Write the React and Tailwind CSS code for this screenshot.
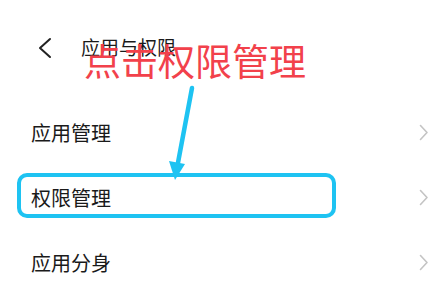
import React from 'react';

const rows = ['应用管理', '权限管理', '应用分身'];

function ChevronRight() {
  return (
    <svg width="10" height="17" viewBox="0 0 10 17" fill="none">
      <path d="M1.5 1.5 L8 8.5 L1.5 15.5" stroke="#c4c4c4" strokeWidth="1.6" strokeLinecap="round" strokeLinejoin="round" />
    </svg>
  );
}

export default function App() {
  return (
    <div
      className="relative w-[437px] h-[283px] overflow-hidden bg-white text-[#1a1a1a]"
      style={{ fontFamily: '"Noto Sans CJK SC", "Noto Sans", sans-serif' }}
    >
      {/* Header */}
      <div className="h-[100px] flex items-start pt-[36px] pl-[37px]">
        <svg width="16" height="22" viewBox="0 0 16 22" fill="none" className="mt-[1px]">
          <path d="M13 2 L3 11 L13 20" stroke="#222" strokeWidth="2" strokeLinecap="round" strokeLinejoin="round" />
        </svg>
        <span className="ml-[28px] text-[19px] leading-[22px]">应用与权限</span>
      </div>

      {/* Rows */}
      {rows.map((r, i) => (
        <div key={i} className="relative h-[65px] flex items-center justify-between pl-[31px] pr-[8px]">
          {i === 1 && (
            <div className="absolute left-[17px] top-[8px] w-[319px] h-[45px] rounded-[10px] border-[4px] border-[#1ec3f2]" />
          )}
          <span className="text-[20px] leading-none">{r}</span>
          <ChevronRight />
        </div>
      ))}

      {/* Annotation */}
      <div className="absolute left-[84px] top-[42px] text-[37px] leading-none text-[#f2414b]">点击权限管理</div>
      <svg className="absolute left-0 top-0" width="437" height="283" viewBox="0 0 437 283" fill="none">
        <path d="M192 88 L177 168" stroke="#1ec3f2" strokeWidth="4.5" strokeLinecap="round" />
        <path d="M169 161 L185 164 L175 180 Z" fill="#1ec3f2" />
      </svg>
    </div>
  );
}
